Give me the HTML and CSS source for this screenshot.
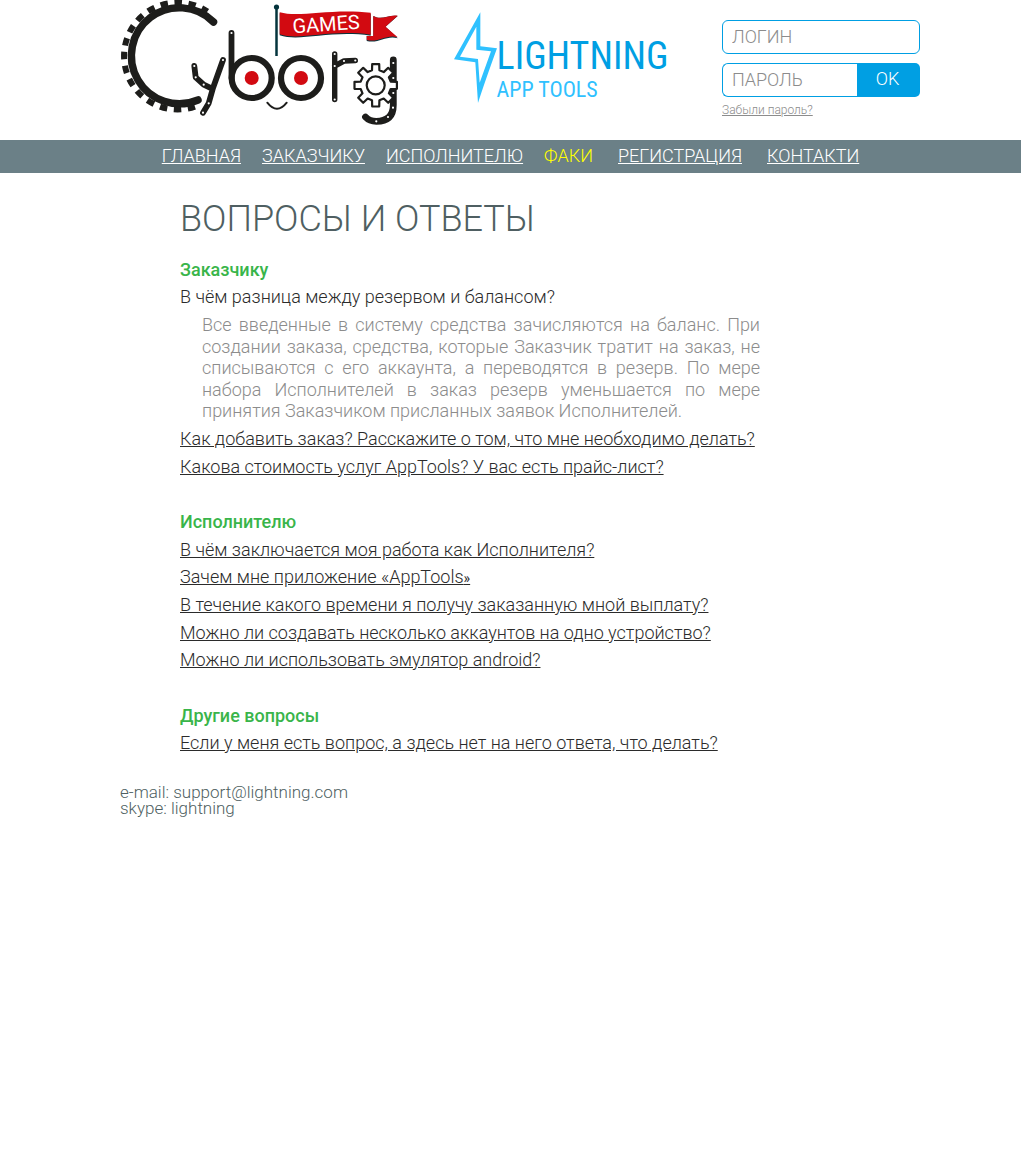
FILE: index.html
```html
<!DOCTYPE html>
<html lang="ru">
<head>
<meta charset="utf-8">
<meta name="viewport" content="width=device-width, initial-scale=1">
<title>Вопросы и ответы</title>
<link rel="stylesheet" href="styles.css">
</head>
<body>
<header class="header">
  <a class="logo" href="#" aria-label="Cyborg Games">
    <svg class="logo-art" viewBox="120 0 280 126" fill="none" stroke-linecap="round" stroke-linejoin="round">
      <!-- toothed C -->
      <g stroke="#1d1d1b">
        <path d="M213.500 22 A48 48 0 1 0 198 100" stroke-width="7.500"/>
        <path d="M194.900 106.600 A53.500 53.500 0 1 1 207.400 11.600" stroke-width="6" stroke-linecap="butt" stroke-dasharray="7.470 6.540"/>
        <!-- y -->
        <path d="M194.300 66 L195.700 77.300 L203.700 84.700 L212 88.700 M223 60 L213 88 L208.700 103.300 L203 112.700" stroke-width="5.800"/>
        <!-- b, o, r -->
        <path d="M231.500 33 V78" stroke-width="5.800"/>
        <circle cx="251.700" cy="78" r="20" stroke-width="6.200"/>
        <circle cx="301" cy="78" r="20" stroke-width="6.200"/>
        <path d="M334.700 54 V99.500 M334.700 66 L344 61 L355.300 60.500" stroke-width="5.400"/>
        <!-- g -->
        <path d="M393.300 60 V105 Q393.300 121.300 376.300 121.300 Q369.500 121.300 365.500 117" stroke-width="6.800"/>
        <path d="M267.300 102.700 Q277 115 286.700 102.700" stroke-width="2"/>
        <g transform="translate(375.700 85.300)" stroke-width="2.200" fill="#fff">
          <path d="M15 -3.700 L21.200 -3.500 V3.500 L15 3.700 L13.200 8 L17.500 12.500 L12.500 17.500 L8 13.200 L3.700 15 L3.500 21.200 H-3.500 L-3.700 15 L-8 13.200 L-12.500 17.500 L-17.500 12.500 L-13.200 8 L-15 3.700 L-21.200 3.500 V-3.500 L-15 -3.700 L-13.200 -8 L-17.500 -12.500 L-12.500 -17.500 L-8 -13.200 L-3.700 -15 L-3.500 -21.200 H3.500 L3.700 -15 L8 -13.200 L12.500 -17.500 L17.500 -12.500 L13.200 -8 Z"/>
          <circle r="9"/>
        </g>
      </g>
      <!-- rivets -->
      <path stroke="#fff" stroke-width="2.200" d="M194.300 66h0 M195.700 77.300h0 M203.700 84.700h0 M223 60h0 M208.700 103.300h0 M203 112.700h0 M231.500 33h0 M334.700 54h0 M334.700 66h0 M334.700 99.500h0 M344 61h0 M355.300 60.500h0 M393.300 63h0 M393.300 78h0 M393.300 93h0 M393 107.700h0 M388 117h0 M376.300 121.300h0"/>
      <circle cx="251.700" cy="78" r="7" fill="#d20a11"/>
      <circle cx="301" cy="78" r="7" fill="#d20a11"/>
      <!-- flag -->
      <path d="M276.500 7 V56" stroke="#04343d" stroke-width="2.500" stroke-linecap="butt"/>
      <circle cx="276.500" cy="7" r="2.600" fill="#04343d"/>
      <path d="M279.700 13.300 C300 19 330 9 370.700 13.700 V35.700 C330 30 300 42 279.700 35.300 Z" fill="#04343d"/>
      <path d="M279.700 12.300 C300 18 330 8 370.700 12.700 V34.700 C330 29 300 41 279.700 34.300 Z" fill="#d20a11"/>
      <path d="M373.300 16 C382 21 389 14 397.700 16 L385.500 26.700 L397.700 38.300 C386 35 379 44 366.700 41 V36 H373.300 Z" fill="#04343d"/>
      <path d="M373.300 16 C382 21 389 14 397.700 15.700 L385.500 26.700 L397.700 37.300 C386 34 379 43 366.700 40 V36 H373.300 Z" fill="#d20a11"/>
      <text class="flag-text" x="326" y="31" text-anchor="middle" transform="rotate(-4 326 24)">GAMES</text>
    </svg>
  </a>
  <a class="brand" href="#">
    <svg class="bolt" viewBox="27 36 129 273" aria-hidden="true">
      <path fill="#2fc1ff" fill-rule="evenodd" d="M106 37 V139 L156 145 Q118 250 99 309 L91 187 L27 178 Z M94 80 V149 L138 154 L104 248 L99 177 L45 170 Z"/>
    </svg>
    <span class="brand-text">
      <span class="brand-name">LIGHTNING</span>
      <span class="brand-sub">APP TOOLS</span>
    </span>
  </a>
  <form class="login">
    <input class="field" type="text" placeholder="ЛОГИН" aria-label="Логин">
    <div class="login-row">
      <input class="field field-password" type="password" placeholder="ПАРОЛЬ" aria-label="Пароль">
      <button class="submit" type="submit">OK</button>
    </div>
    <a class="forgot" href="#">Забыли пароль?</a>
  </form>
</header>
<nav class="nav">
  <a href="#">ГЛАВНАЯ</a>
  <a href="#">ЗАКАЗЧИКУ</a>
  <a href="#">ИСПОЛНИТЕЛЮ</a>
  <a class="current" href="#" aria-current="page">ФАКИ</a>
  <a href="#">РЕГИСТРАЦИЯ</a>
  <a href="#">КОНТАКТИ</a>
</nav>
<div class="page">
  <main class="faq">
    <h1>ВОПРОСЫ И ОТВЕТЫ</h1>
    <section class="group">
      <h2>Заказчику</h2>
      <p>В чём разница между резервом и балансом?</p>
      <p class="answer">Все введенные в систему средства зачисляются на баланс. При создании заказа, средства, которые Заказчик тратит на заказ, не списываются с его аккаунта, а переводятся в резерв. По мере набора Исполнителей в заказ резерв уменьшается по мере принятия Заказчиком присланных заявок Исполнителей.</p>
      <a href="#">Как добавить заказ? Расскажите о том, что мне необходимо делать?</a>
      <a href="#">Какова стоимость услуг AppTools? У вас есть прайс-лист?</a>
    </section>
    <section class="group">
      <h2>Исполнителю</h2>
      <a href="#">В чём заключается моя работа как Исполнителя?</a>
      <a href="#">Зачем мне приложение «AppTools<b class="quote">»</b></a>
      <a href="#">В течение какого времени я получу заказанную мной выплату?</a>
      <a href="#">Можно ли создавать несколько аккаунтов на одно устройство?</a>
      <a href="#">Можно ли использовать эмулятор android?</a>
    </section>
    <section class="group">
      <h2>Другие вопросы</h2>
      <a href="#">Если у меня есть вопрос, а здесь нет на него ответа, что делать?</a>
    </section>
  </main>
  <footer class="footer">
    <p>e-mail: support@lightning.com<br>skype: lightning</p>
  </footer>
</div>
</body>
</html>
```
FILE: styles.css
```css
* {
  box-sizing: border-box;
}

body {
  margin: 0;
  background: #fff;
  color: #2b2b2b;
  font-family: Roboto, "Noto Sans", sans-serif;
  font-size: 18px;
  font-weight: 300;
  line-height: 1.2;
}

h1,
h2,
p {
  margin: 0;
}

.header {
  display: flex;
  justify-content: space-between;
  align-items: flex-start;
  max-width: 821px;
  min-height: 140px;
  margin: 0 auto;
  padding: 0 1px 0 20px;
}

.logo-art {
  display: block;
  width: 280px;
}

.flag-text {
  fill: #fff;
  font-size: 20px;
  font-weight: 400;
}

.brand {
  display: flex;
  padding-top: 12px;
  text-decoration: none;
}

.bolt {
  width: 43px;
  height: 91px;
}

.brand-text {
  display: flex;
  flex-direction: column;
  padding-top: 24px;
  font-family: "Roboto Condensed", Roboto, sans-serif;
  font-weight: 400;
}

.brand-name {
  color: #009fe3;
  font-size: 38px;
  line-height: 40px;
}

.brand-sub {
  color: #2fc1ff;
  font-size: 22px;
  line-height: 28px;
}

.login {
  display: flex;
  flex-direction: column;
  width: 198px;
  padding-top: 20px;
}

.login-row {
  display: flex;
  margin-top: 9px;
}

.field {
  width: 100%;
  height: 34px;
  padding: 0 9px 2px;
  border: 1px solid #009fe3;
  border-radius: 6px;
  background: #fff;
  color: #2b2b2b;
  font: inherit;
}

.field::placeholder {
  color: #8c8c8c;
  opacity: 1;
}

.field-password {
  flex: 1;
  min-width: 0;
  border-right: 0;
  border-radius: 6px 0 0 6px;
}

.submit {
  width: 63px;
  padding: 0 8px 2px 6px;
  border: 0;
  border-radius: 0 5px 5px 0;
  background: #009fe3;
  color: #fff;
  font: inherit;
}

.forgot {
  align-self: flex-start;
  margin-top: 6px;
  color: #8c8c8c;
  font-size: 12px;
}

.nav {
  display: flex;
  flex-wrap: wrap;
  justify-content: center;
  gap: 0 21px;
  padding: 5px 0 6px;
  background: #6b8087;
}

.nav a {
  color: #fff;
}

.nav .current {
  margin-right: 4px;
  color: #ff0;
  text-decoration: none;
}

.nav a:last-child {
  margin-left: 4px;
}

.page {
  max-width: 781px;
  margin: 0 auto;
}

.faq {
  max-width: 700px;
  padding: 25px 60px 0;
}

.faq h1 {
  margin-bottom: 18px;
  color: #4f5f62;
  font-size: 36px;
  font-weight: 300;
}

.group {
  display: flex;
  flex-direction: column;
  align-items: flex-start;
  gap: 6px;
  margin-bottom: 34px;
}

.group:last-child {
  margin-bottom: 30px;
}

.group h2 {
  color: #39b54a;
  font-size: 18px;
  font-weight: 500;
}

.group a {
  color: inherit;
}

.group .answer {
  padding-left: 22px;
  color: #8c8c8c;
  text-align: justify;
}

.quote {
  font-size: 14px;
}

.footer {
  padding-bottom: 20px;
  color: #4f5f62;
  font-size: 17px;
  line-height: 16px;
}
```
